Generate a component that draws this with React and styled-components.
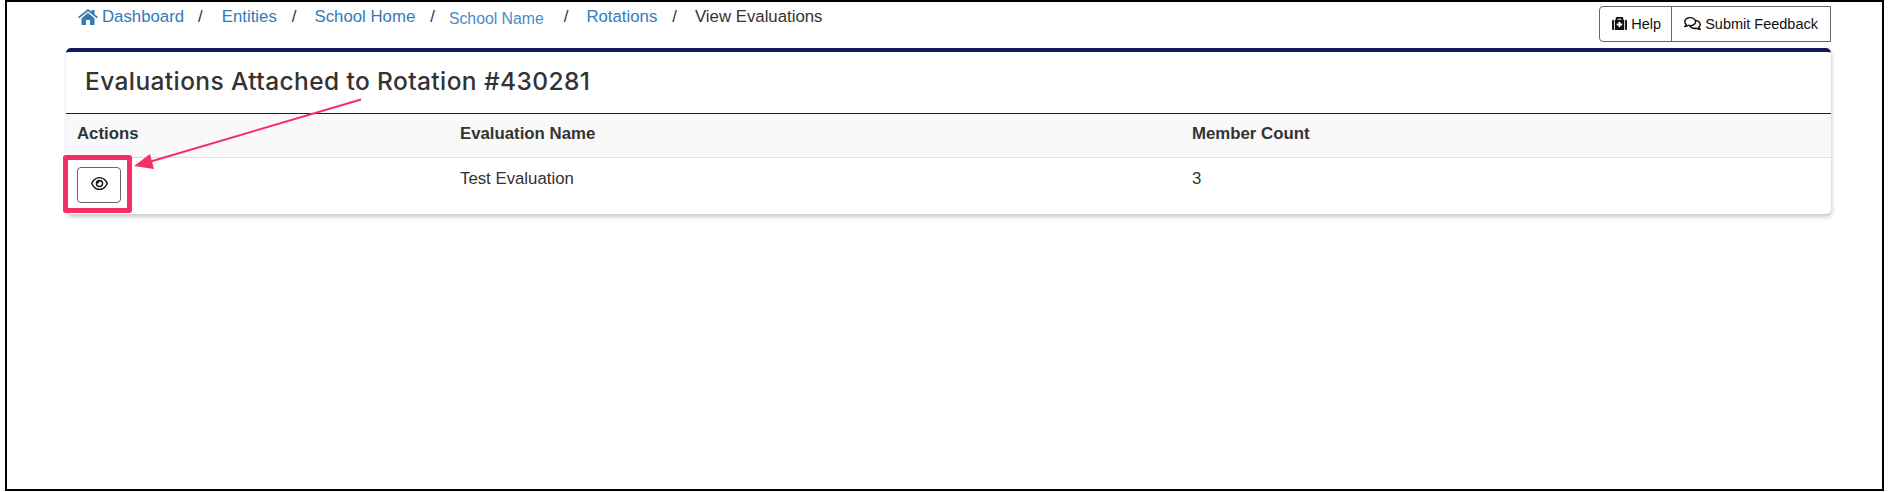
import React from 'react'
import styled, { createGlobalStyle } from 'styled-components'
import { FaMedkit, FaRegComments } from 'react-icons/fa'
import { FaRegEye } from 'react-icons/fa6'

const GlobalStyle = createGlobalStyle`
    html, body {
        margin: 0;
        padding: 0;
        background: #fff;
    }
    body {
        font-family: "Liberation Sans", Arial, sans-serif;
        font-size: 16.8px;
        color: #333;
    }
`;

const Frame = styled.div`
    position: relative;
    box-sizing: border-box;
    width: 1879px;
    height: 491px;
    margin-left: 5px;
    border: 2px solid #000;
    padding: 4px 51px 0 59px;
`;

const TopBar = styled.div`
    display: flex;
    justify-content: space-between;
    align-items: flex-start;
    height: 36px;
    margin-bottom: 6px;
`;

const Crumbs = styled.nav`
    display: flex;
    align-items: center;
    padding-left: 12px;
    line-height: 22px;
`;

const CrumbLink = styled.a`
    color: #337ab7;
    text-decoration: none;
    display: inline-flex;
    align-items: center;
    gap: 4px;
    svg {
        width: 20px;
        height: 16px;
    }
`;

const CrumbPasted = styled.span`
    color: #4a8cc4;
    font-size: 15.8px;
    position: relative;
    top: 2px;
`;

const CrumbSep = styled.span`
    color: #333;
    margin-left: ${props => props.$before || '15px'};
    margin-right: ${props => props.$after || '18px'};
`;

const CrumbCurrent = styled.span`
    color: #333;
`;

const ButtonGroup = styled.div`
    display: flex;
    height: 36px;
    box-sizing: border-box;
    border: 1px solid #666;
    border-radius: 4px 0 0 4px;
    font-size: 14.5px;
    color: #111;
`;

const GroupButton = styled.button`
    display: flex;
    align-items: center;
    gap: 4px;
    border: 0;
    background: transparent;
    font: inherit;
    color: inherit;
    padding: 0 12px 1px;
    &:first-child {
        padding-right: 10px;
    }
    & + & {
        border-left: 1px solid #666;
    }
    svg {
        width: ${props => props.$icon || '15px'};
        height: 15px;
    }
`;

const Card = styled.section`
    background: #fff;
    border-top: 4px solid #14185e;
    border-radius: 5px;
    height: 162px;
    box-shadow: 1px 3px 4px rgba(0, 0, 0, 0.2);
    overflow: hidden;
`;

const CardHeader = styled.header`
    display: flex;
    align-items: center;
    box-sizing: border-box;
    height: 62px;
    padding: 0 0 4px 19px;
    border-bottom: 1px solid #14185e;
`;

const Title = styled.h1`
    margin: 0;
    font-family: "Inter", "Noto Sans", sans-serif;
    font-size: 24.5px;
    font-weight: 500;
    letter-spacing: 0.4px;
    color: #333;
`;

const Table = styled.table`
    width: 100%;
    border-collapse: collapse;
    table-layout: fixed;
`;

const HeadCell = styled.th`
    box-sizing: border-box;
    background: #f9f9f9;
    height: 43px;
    padding: 0 10px 2px 11px;
    text-align: left;
    font-size: 16.8px;
    font-weight: 700;
    color: #333;
    border-bottom: 1px solid #ddd;
    width: ${props => props.$width};
`;

const Cell = styled.td`
    height: 57px;
    box-sizing: border-box;
    padding: 11px 10px 0 11px;
    vertical-align: top;
    font-size: 16.8px;
    color: #333;
`;

const ActionCell = styled(Cell)`
    padding-top: 9px;
`;

const ViewButton = styled.button`
    display: flex;
    align-items: center;
    justify-content: center;
    width: 44px;
    height: 36px;
    border: 1px solid #666;
    border-radius: 4px;
    background: #fff;
    color: #111;
    padding: 0 0 2px;
    svg {
        width: 17px;
        height: 17px;
    }
`;

const Highlight = styled.div`
    position: absolute;
    left: 56px;
    top: 153px;
    width: 69px;
    height: 58px;
    box-sizing: border-box;
    border: 5px solid #f42e66;
    border-radius: 3px;
`;

const Arrow = styled.svg`
    position: absolute;
    left: 120px;
    top: 90px;
    width: 250px;
    height: 85px;
`;

const HomeIcon = () => (
    <svg viewBox="0 0 20 16" fill="currentColor">
        <path d="M0 8 10 0l3.5 2.8V1h3v4.2L20 8l-1.2 1.3L10 2.2 1.2 9.3z" />
        <path d="M3.5 9.2 10 3.8l6.5 5.4V16H12v-5H8v5H3.5z" />
    </svg>
);

const App = () => (
    <>
        <GlobalStyle />
        <Frame>
            <TopBar>
                <Crumbs>
                    <CrumbLink href="#"><HomeIcon />Dashboard</CrumbLink>
                    <CrumbSep $before="14px" $after="19px">/</CrumbSep>
                    <CrumbLink href="#">Entities</CrumbLink>
                    <CrumbSep>/</CrumbSep>
                    <CrumbLink href="#">School Home</CrumbLink>
                    <CrumbSep $after="14px">/</CrumbSep>
                    <CrumbPasted>School Name</CrumbPasted>
                    <CrumbSep $before="20px" $after="18px">/</CrumbSep>
                    <CrumbLink href="#">Rotations</CrumbLink>
                    <CrumbSep>/</CrumbSep>
                    <CrumbCurrent>View Evaluations</CrumbCurrent>
                </Crumbs>
                <ButtonGroup>
                    <GroupButton><FaMedkit />Help</GroupButton>
                    <GroupButton $icon="17px"><FaRegComments />Submit Feedback</GroupButton>
                </ButtonGroup>
            </TopBar>
            <Card>
                <CardHeader>
                    <Title>Evaluations Attached to Rotation #430281</Title>
                </CardHeader>
                <Table>
                    <thead>
                        <tr>
                            <HeadCell $width="383px">Actions</HeadCell>
                            <HeadCell $width="732px">Evaluation Name</HeadCell>
                            <HeadCell>Member Count</HeadCell>
                        </tr>
                    </thead>
                    <tbody>
                        <tr>
                            <ActionCell><ViewButton><FaRegEye /></ViewButton></ActionCell>
                            <Cell>Test Evaluation</Cell>
                            <Cell>3</Cell>
                        </tr>
                    </tbody>
                </Table>
            </Card>
            <Highlight />
            <Arrow viewBox="0 0 250 85">
                <line x1="234" y1="7.5" x2="22" y2="70" stroke="#f42e66" strokeWidth="2" />
                <polygon points="7,74 23,62 27,77" fill="#f42e66" />
            </Arrow>
        </Frame>
    </>
);

export default App;
